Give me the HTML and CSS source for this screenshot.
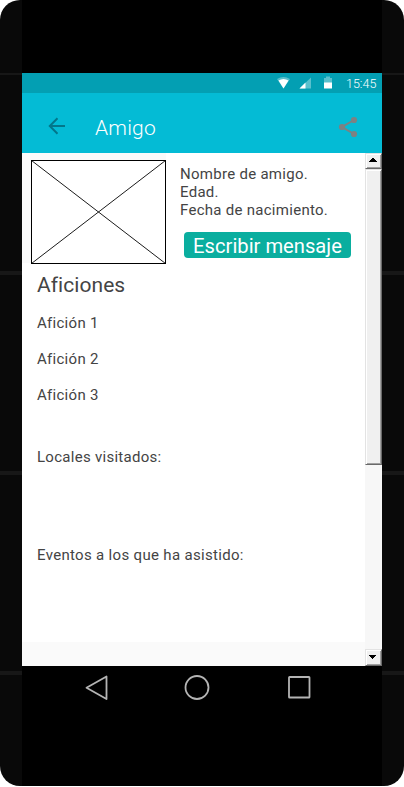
FILE: index.html
```html
<!DOCTYPE html>
<html lang="es">
<head>
<meta charset="utf-8">
<title>Amigo</title>
<link rel="stylesheet" href="styles.css">
</head>
<body>
<div class="phone">
  <div class="screen">
    <div class="status">
      <svg class="status-icons" width="58" height="20" viewBox="0 0 58 20">
        <path d="M0 6Q6.500 2 13 6L6.500 15.500Z" fill="#fff" opacity=".35"/>
        <path d="M1.500 7.500Q6.500 4.500 11.500 7.500L6.500 15.500Z" fill="#fff"/>
        <path d="M22.500 15.500L34 4.500V15.500Z" fill="#fff" opacity=".35"/>
        <path d="M22.500 15.500L28.500 9.500V15.500Z" fill="#fff"/>
        <path d="M47 5h2V3.500h4V5h2v5h-8Z" fill="#fff" opacity=".35"/>
        <path d="M47 9.500h8V15.500h-8Z" fill="#fff"/>
      </svg>
      <span class="clock">15:45</span>
    </div>
    <header class="appbar">
      <svg class="back" width="18" height="18" viewBox="0 0 18 18" fill="none" stroke="#03768a" stroke-width="2"><path d="M17 9H2M9.500 1.200L1.800 9L9.500 16.800"/></svg>
      <h1>Amigo</h1>
      <svg class="share" width="20" height="22" viewBox="0 0 20 22"><path d="M16 4L4 11L16 18" fill="none" stroke="#7d8182" stroke-width="2"/><g fill="#7d8182"><circle cx="16" cy="4" r="3.100"/><circle cx="4" cy="11" r="3.100"/><circle cx="16" cy="18" r="3.100"/></g></svg>
    </header>
    <div class="view">
      <main class="content">
        <section class="profile">
          <div class="photo-area">
            <svg width="135" height="104" viewBox="0 0 135 104" fill="#fff" stroke="#000"><rect x=".5" y=".5" width="134" height="103"/><path d="M.5 .5L134.500 103.500M134.500 .5L.5 103.500" stroke-width=".9"/></svg>
          </div>
          <div class="info">
            <p>Nombre de amigo.<br>Edad.<br>Fecha de nacimiento.</p>
            <button class="message">Escribir mensaje</button>
          </div>
        </section>
        <h2>Aficiones</h2>
        <ul class="hobbies"><li>Afición 1</li><li>Afición 2</li><li>Afición 3</li></ul>
        <h3 class="places">Locales visitados:</h3>
        <h3 class="events">Eventos a los que ha asistido:</h3>
        <div class="foot"></div>
      </main>
      <div class="scrollbar">
        <div class="cell arrow"><svg width="8" height="4" viewBox="0 0 8 4" shape-rendering="crispEdges"><path d="M3 0h2v1h1v1h1v1h1v1H0V3h1V2h1V1h1Z"/></svg></div>
        <div class="cell thumb"></div>
        <div class="track"></div>
        <div class="cell arrow down"><svg width="7" height="4" viewBox="0 0 7 4" shape-rendering="crispEdges"><path d="M0 0h7v1H6v1H5v1H4v1H3V3H2V2H1V1H0Z"/></svg></div>
      </div>
    </div>
    <nav class="nav">
      <svg width="24" height="26" viewBox="0 0 24 26"><path d="M21.500 1.500V24L1.500 12.800Z"/></svg>
      <svg width="26" height="26" viewBox="0 0 26 26"><circle cx="13" cy="12.500" r="11.500"/></svg>
      <svg width="24" height="26" viewBox="0 0 24 26"><rect x="2" y="2" width="20.500" height="20.500" rx=".6"/></svg>
    </nav>
  </div>
</div>
</body>
</html>
```

FILE: styles.css
```css
* { box-sizing: border-box; margin: 0; padding: 0; }
body { background: #fff; font-family: Roboto, sans-serif; overflow: hidden; }
svg { display: block; }
.phone {
  width: 404px; height: 786px; padding: 0 22px; overflow: hidden;
  border-radius: 20px;
  background: linear-gradient(#171717, #171717) 0 73px / 100% 2px no-repeat,
    linear-gradient(#171717, #171717) 0 271px / 100% 4px no-repeat,
    linear-gradient(#171717, #171717) 0 471px / 100% 4px no-repeat,
    linear-gradient(#171717, #171717) 0 671px / 100% 4px no-repeat,
    #090909;
}
.screen { height: 786px; padding-top: 73px; background: #000; }
.status { height: 20px; background: #039fb3; display: flex; justify-content: flex-end; padding-right: 5px; }
.status-icons { margin-right: 11px; }
.clock { width: 31px; font-size: 12.5px; font-weight: 300; line-height: 21px; color: #fff; white-space: nowrap; }
.appbar { height: 60px; background: #04bbd5; display: flex; align-items: flex-start; padding: 0 24px 0 26px; }
.back { margin-top: 24px; }
.appbar h1 { flex: 1; margin: 22px 0 0 29px; font-size: 21px; line-height: 26px; font-weight: 300; letter-spacing: .2px; color: #fff; }
.share { margin-top: 23px; }
.view { display: flex; height: 513px; }
.content { flex: 1; display: flex; flex-direction: column; background: #fff; color: #444; font-size: 15px; line-height: 18px; letter-spacing: .28px; }
.profile { display: flex; height: 111px; }
.photo-area { width: 144px; height: 110px; padding: 7px 0 0 9px; background: #fafafa; }
.info { padding: 12px 0 0 14px; }
.info p { white-space: nowrap; }
.message { display: block; width: 167px; height: 26px; margin: 13px 0 0 4px; border: 0; border-radius: 4px; background: #0aae9f; color: #fff; font: 20.2px/28px Roboto, sans-serif; white-space: nowrap; }
h2 { margin: 8px 0 0 15px; font-size: 21px; line-height: 26px; font-weight: 400; letter-spacing: .05px; }
.hobbies { list-style: none; margin: 16px 0 0 15px; display: grid; gap: 18px; }
h3 { font-size: 15px; font-weight: 400; margin-left: 15px; white-space: nowrap; }
.places { margin-top: 44px; }
.events { margin-top: 80px; letter-spacing: .32px; }
.foot { height: 24px; margin-top: auto; background: #fafafa; }
.scrollbar { width: 17px; display: flex; flex-direction: column; background: #f7f7f7; }
.cell { background: #f0f0f0; border: 1px solid #e3e3e3; border-right: 1px solid #696969; border-bottom: 1px solid #696969; box-shadow: inset 1px 1px #fff, inset -1px -1px #a0a0a0; }
.arrow { height: 16px; display: flex; align-items: center; justify-content: center; padding: 0 2px 2px 0; }
.thumb { height: 296px; }
.track { flex: 1; }
.down { height: 17px; }
.nav { display: flex; padding: 9px 71px 0 63px; justify-content: space-between; fill: none; stroke: #b4b4b4; stroke-width: 1.8; stroke-linejoin: round; }
.nav svg:nth-child(2) { margin-right: 2px; }
```
